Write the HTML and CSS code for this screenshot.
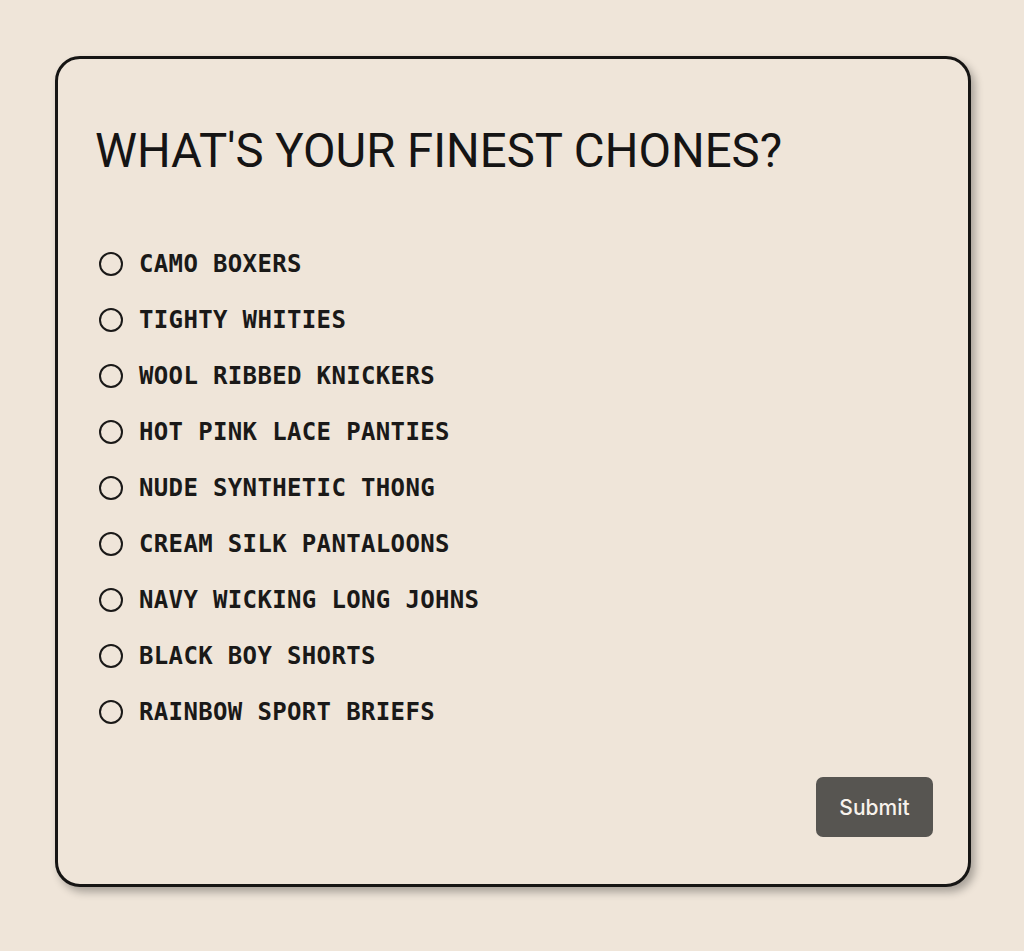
FILE: index.html
```html
<!DOCTYPE html>
<html lang="en">
<head>
<meta charset="utf-8">
<title>Finest Chones</title>
<link rel="stylesheet" href="styles.css">
</head>
<body>
<form class="card">
  <h1 class="title">WHAT'S YOUR FINEST CHONES?</h1>
  <div class="options">
    <label class="option"><input type="radio" name="c" class="radio"><span>CAMO BOXERS</span></label>
    <label class="option"><input type="radio" name="c" class="radio"><span>TIGHTY WHITIES</span></label>
    <label class="option"><input type="radio" name="c" class="radio"><span>WOOL RIBBED KNICKERS</span></label>
    <label class="option"><input type="radio" name="c" class="radio"><span>HOT PINK LACE PANTIES</span></label>
    <label class="option"><input type="radio" name="c" class="radio"><span>NUDE SYNTHETIC THONG</span></label>
    <label class="option"><input type="radio" name="c" class="radio"><span>CREAM SILK PANTALOONS</span></label>
    <label class="option"><input type="radio" name="c" class="radio"><span>NAVY WICKING LONG JOHNS</span></label>
    <label class="option"><input type="radio" name="c" class="radio"><span>BLACK BOY SHORTS</span></label>
    <label class="option"><input type="radio" name="c" class="radio"><span>RAINBOW SPORT BRIEFS</span></label>
  </div>
  <button type="button" class="submit">Submit</button>
</form>
</body>
</html>
```
FILE: styles.css
```css
html, body {
  margin: 0;
  padding: 0;
  background: #efe5d9;
}
body {
  padding: 56px 0 0 55px;
  height: 951px;
  box-sizing: border-box;
}
.card {
  width: 916px;
  height: 831px;
  box-sizing: border-box;
  border: 3px solid #161514;
  border-radius: 25px;
  background: #efe5d9;
  box-shadow: 4px 5px 9px rgba(0, 0, 0, 0.3);
  padding: 64px 35px 47px 37px;
  display: flex;
  flex-direction: column;
}
.title {
  margin: 0;
  font-family: Roboto, "Liberation Sans", sans-serif;
  font-weight: 400;
  font-size: 47.3px;
  line-height: 56px;
  color: #151414;
}
.options {
  margin-top: 69px;
  display: flex;
  flex-direction: column;
  gap: 24px;
}
.option {
  display: flex;
  align-items: center;
  height: 32px;
  font-family: "DejaVu Sans Mono", "Liberation Mono", monospace;
  font-weight: 700;
  font-size: 24px;
  letter-spacing: 0.35px;
  color: #1a1918;
  padding-left: 4px;
}
.radio {
  appearance: none;
  -webkit-appearance: none;
  margin: 0 16px 0 0;
  width: 24px;
  height: 24px;
  border: 2px solid #1a1918;
  border-radius: 50%;
  box-sizing: border-box;
  background: transparent;
}
.submit {
  margin-top: auto;
  align-self: flex-end;
  width: 117px;
  height: 60px;
  border: none;
  border-radius: 7px;
  background: #575551;
  color: #f7f2ec;
  font-family: Inter, "Liberation Sans", sans-serif;
  font-weight: 500;
  font-size: 21px;
}
```
